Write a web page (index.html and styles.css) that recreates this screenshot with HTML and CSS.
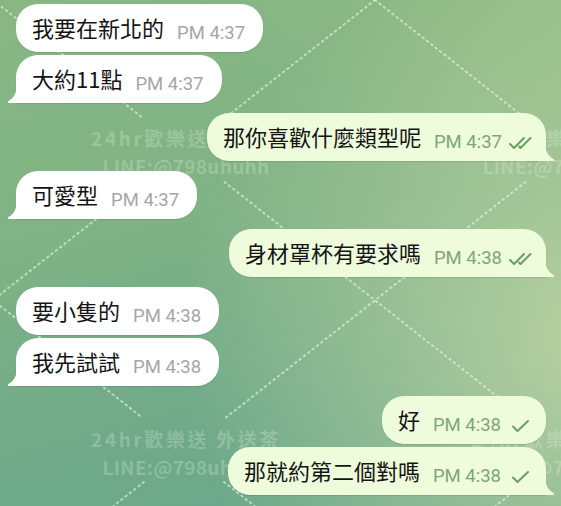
FILE: index.html
```html
<!DOCTYPE html>
<html lang="zh-Hant">
	<head>
		<meta charset="UTF-8" />
		<meta name="viewport" content="width=device-width, initial-scale=1.0" />
		<title>聊天</title>
		<link rel="stylesheet" href="styles.css">
	</head>
	<body>
		<div class="screen">
			<div class="wallpaper">
				<svg class="lines" width="561" height="506" viewBox="0 0 561 506">
					<g class="dots">
						<line x1="-7" y1="0" x2="143" y2="118" />
						<line x1="224.5" y1="182" x2="524.7" y2="418" />
						<line x1="375" y1="0" x2="525" y2="118" />
						<line x1="-389" y1="0" x2="142.7" y2="418" />
						<line x1="224" y1="482" x2="254.6" y2="506" />
						<line x1="375" y1="0" x2="224.9" y2="118" />
						<line x1="143.5" y1="182" x2="-7" y2="300" />
						<line x1="757" y1="0" x2="607" y2="118" />
						<line x1="525.5" y1="182" x2="225.3" y2="418" />
						<line x1="143.9" y1="482" x2="113.4" y2="506" />
						<line x1="525.9" y1="482" x2="495.4" y2="506" />
					</g>
				</svg>
				<div class="mark" style="left: 186px; top: 152px">
					<div class="mark-title">24hr歡樂送 外送茶</div>
					<div class="mark-line">LINE:@798uhuhh</div>
				</div>
				<div class="mark" style="left: 566px; top: 152px">
					<div class="mark-title">24hr歡樂送 外送茶</div>
					<div class="mark-line">LINE:@798uhuhh</div>
				</div>
				<div class="mark" style="left: 186px; top: 453px">
					<div class="mark-title">24hr歡樂送 外送茶</div>
					<div class="mark-line">LINE:@798uhuhh</div>
				</div>
				<div class="mark" style="left: 566px; top: 453px">
					<div class="mark-title">24hr歡樂送 外送茶</div>
					<div class="mark-line">LINE:@798uhuhh</div>
				</div>
			</div>

			<div class="chat">
				<div class="msg in">
					<div class="bubble">
						<span class="text">我要在新北的</span>
						<span class="time">PM 4:37</span>
					</div>
				</div>
				<div class="msg in next">
					<div class="bubble tailed">
						<span class="text">大約11點</span>
						<span class="time">PM 4:37</span>
						<svg class="tail" width="10" height="18" viewBox="0 0 10 18"><path d="M10 0 C10 7 7 13 1.5 16 C0.3 16.6 0.6 18 2 18 H10 Z" /></svg>
					</div>
				</div>

				<div class="msg out">
					<div class="bubble tailed">
						<span class="text">那你喜歡什麼類型呢</span>
						<span class="time">PM 4:37</span>
						<svg class="check" width="26" height="14" viewBox="0 0 26 14"><path d="M2 8 L6 12 L16 2 M11 10.5 L12.5 12 L22.5 2" /></svg>
						<svg class="tail" width="10" height="18" viewBox="0 0 10 18"><path d="M10 0 C10 7 7 13 1.5 16 C0.3 16.6 0.6 18 2 18 H10 Z" /></svg>
					</div>
				</div>

				<div class="msg in">
					<div class="bubble tailed">
						<span class="text">可愛型</span>
						<span class="time">PM 4:37</span>
						<svg class="tail" width="10" height="18" viewBox="0 0 10 18"><path d="M10 0 C10 7 7 13 1.5 16 C0.3 16.6 0.6 18 2 18 H10 Z" /></svg>
					</div>
				</div>

				<div class="msg out">
					<div class="bubble tailed">
						<span class="text">身材罩杯有要求嗎</span>
						<span class="time">PM 4:38</span>
						<svg class="check" width="26" height="14" viewBox="0 0 26 14"><path d="M2 8 L6 12 L16 2 M11 10.5 L12.5 12 L22.5 2" /></svg>
						<svg class="tail" width="10" height="18" viewBox="0 0 10 18"><path d="M10 0 C10 7 7 13 1.5 16 C0.3 16.6 0.6 18 2 18 H10 Z" /></svg>
					</div>
				</div>

				<div class="msg in">
					<div class="bubble">
						<span class="text">要小隻的</span>
						<span class="time">PM 4:38</span>
					</div>
				</div>
				<div class="msg in next">
					<div class="bubble tailed">
						<span class="text">我先試試</span>
						<span class="time">PM 4:38</span>
						<svg class="tail" width="10" height="18" viewBox="0 0 10 18"><path d="M10 0 C10 7 7 13 1.5 16 C0.3 16.6 0.6 18 2 18 H10 Z" /></svg>
					</div>
				</div>

				<div class="msg out">
					<div class="bubble">
						<span class="text">好</span>
						<span class="time">PM 4:38</span>
						<svg class="check single" width="20" height="14" viewBox="0 0 20 14"><path d="M2 7.5 L6.5 12 L17 2" /></svg>
					</div>
				</div>
				<div class="msg out next">
					<div class="bubble tailed">
						<span class="text">那就約第二個對嗎</span>
						<span class="time">PM 4:38</span>
						<svg class="check single" width="20" height="14" viewBox="0 0 20 14"><path d="M2 7.5 L6.5 12 L17 2" /></svg>
						<svg class="tail" width="10" height="18" viewBox="0 0 10 18"><path d="M10 0 C10 7 7 13 1.5 16 C0.3 16.6 0.6 18 2 18 H10 Z" /></svg>
					</div>
				</div>
			</div>
		</div>
	</body>
</html>
```

FILE: styles.css
```css
body {
	margin: 0;
	font-family: Roboto, "Noto Sans CJK TC", sans-serif;
	overflow: hidden;
}
.screen {
	position: relative;
	width: 561px;
	height: 506px;
	overflow: hidden;
	background:
		radial-gradient(ellipse 430px 400px at 610px 340px, rgba(192, 213, 163, 0.95), rgba(192, 213, 163, 0) 100%),
		radial-gradient(ellipse 320px 220px at 560px 0px, rgba(152, 192, 137, 0.8), rgba(152, 192, 137, 0) 100%),
		linear-gradient(165deg, #88b782 0%, #7fb285 40%, #6ea98a 75%, #6aa78b 100%);
}
.wallpaper {
	position: absolute;
	inset: 0;
}
.lines {
	position: absolute;
	left: 0;
	top: 0;
}
.dots line {
	stroke: rgba(236, 248, 226, 0.6);
	stroke-width: 2;
	stroke-dasharray: 1.5 4;
	stroke-linecap: round;
}
.mark {
	position: absolute;
	transform: translate(-50%, -50%);
	text-align: center;
	white-space: nowrap;
	font-family: "Noto Sans CJK TC", sans-serif;
	font-weight: bold;
	font-size: 19px;
	line-height: 28px;
	color: rgba(235, 248, 228, 0.26);
}
.mark-title {
	letter-spacing: 2.6px;
}
.mark-line {
	letter-spacing: 0.3px;
}

.chat {
	position: relative;
	display: flex;
	flex-direction: column;
	padding-top: 4px;
}
.msg {
	display: flex;
	margin-top: 10px;
}
.msg:first-child {
	margin-top: 0;
}
.msg.next {
	margin-top: 3px;
}
.msg.in {
	justify-content: flex-start;
	padding-left: 16px;
}
.msg.out {
	justify-content: flex-end;
	padding-right: 15px;
}

.bubble {
	position: relative;
	display: flex;
	align-items: baseline;
	box-sizing: border-box;
	height: 48px;
	padding: 10px 18px 0 16px;
	border-radius: 22px;
	background-color: #fff;
	box-shadow: 0 1px 1px rgba(0, 0, 0, 0.1);
}
.out .bubble {
	background-color: #eefcdc;
	padding-right: 12px;
}
.in .bubble.tailed {
	border-bottom-left-radius: 0;
}
.out .bubble.tailed {
	border-bottom-right-radius: 0;
}
.text {
	font-family: "Noto Sans CJK TC", sans-serif;
	font-size: 22px;
	line-height: 26px;
	color: #141414;
}
.time {
	position: relative;
	top: 2px;
	margin-left: 13px;
	font-family: Roboto, sans-serif;
	font-size: 18.5px;
	color: #a6a6a6;
}
.out .time {
	color: #80a57b;
}
.check {
	align-self: flex-end;
	margin: 0 0 11px 6px;
}
.check.single {
	margin-left: 10px;
	margin-right: 3px;
}
.check path {
	fill: none;
	stroke: #6a9f64;
	stroke-width: 2;
	stroke-linecap: round;
	stroke-linejoin: round;
}
.tail {
	position: absolute;
	bottom: 0;
}
.tail path {
	fill: #fff;
}
.in .tail {
	left: -9px;
}
.out .tail {
	right: -9px;
	transform: scaleX(-1);
}
.out .tail path {
	fill: #eefcdc;
}
```
